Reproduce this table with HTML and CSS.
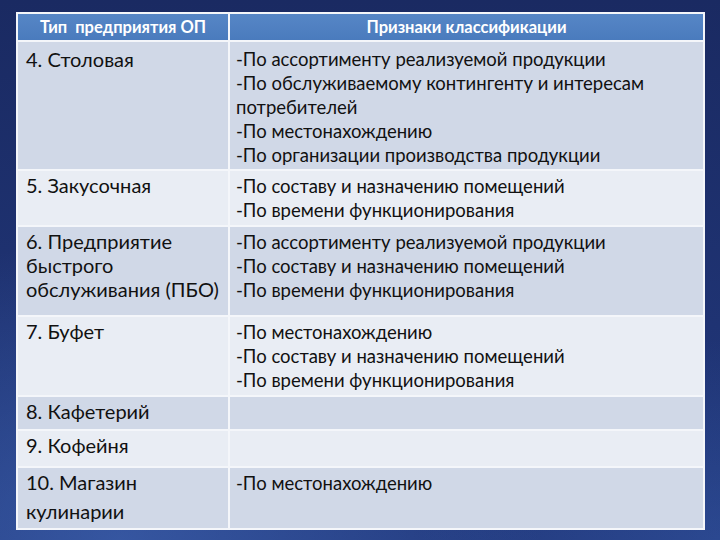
FILE: index.html
```html
<!DOCTYPE html>
<html lang="ru">
<head>
<meta charset="utf-8">
<link rel="stylesheet" href="styles.css">
</head>
<body>
<div class="slide">
<table class="grid">
  <colgroup><col class="c1"><col class="c2"></colgroup>
  <thead>
    <tr class="head"><th>Тип&nbsp; предприятия ОП</th><th>Признаки классификации</th></tr>
  </thead>
  <tbody>
    <tr class="odd r4"><td class="name">4. Столовая</td><td class="sign">-По ассортименту реализуемой продукции<br>-По обслуживаемому контингенту и интересам потребителей<br>-По местонахождению<br>-По организации производства продукции</td></tr>
    <tr class="even r5"><td class="name">5. Закусочная</td><td class="sign">-По составу и назначению помещений<br>-По времени функционирования</td></tr>
    <tr class="odd r6"><td class="name">6. Предприятие быстрого обслуживания (ПБО)</td><td class="sign">-По ассортименту реализуемой продукции<br>-По составу и назначению помещений<br>-По времени функционирования</td></tr>
    <tr class="even r7"><td class="name">7. Буфет</td><td class="sign">-По местонахождению<br>-По составу и назначению помещений<br>-По времени функционирования</td></tr>
    <tr class="odd r8"><td class="name">8. Кафетерий</td><td class="sign"></td></tr>
    <tr class="even r9"><td class="name">9. Кофейня</td><td class="sign"></td></tr>
    <tr class="odd r10"><td class="name">10. Магазин кулинарии</td><td class="sign">-По местонахождению</td></tr>
  </tbody>
</table>
</div>
</body>
</html>
```
FILE: styles.css
```css
html, body {
  margin: 0;
  padding: 0;
}
body {
  width: 720px;
  height: 540px;
  overflow: hidden;
  background: #1c2d6a;
}
.slide {
  width: 720px;
  height: 540px;
  box-sizing: border-box;
  padding: 12px 0 0 16px;
  background:
    radial-gradient(ellipse 420px 300px at 120px 540px, rgba(70,110,190,0.55), rgba(70,110,190,0) 100%),
    radial-gradient(ellipse 300px 200px at 720px 540px, rgba(60,100,180,0.35), rgba(60,100,180,0) 100%),
    linear-gradient(180deg, #1a2a62 0%, #1f3373 60%, #22397d 100%);
  font-family: Lato, "Liberation Sans", sans-serif;
}
.grid {
  width: 687px;
  border-collapse: collapse;
  table-layout: fixed;
  color: #111;
}
.c1 { width: 212px; }
.c2 { width: 475px; }
.grid th, .grid td {
  border: 2px solid #f4f6fa;
  vertical-align: top;
  text-align: left;
}
.head { height: 28px; }
.head th {
  padding: 2px 0 0;
  background: linear-gradient(180deg, #5686c6 0%, #4a7bbd 100%);
  color: #fff;
  font-weight: bold;
  font-size: 16.5px;
  text-align: center;
  line-height: 22px;
}
.odd td { background: #d0d8e7; }
.even td { background: #e9edf4; }
.name {
  padding: 2px 2px 0 8px;
  font-size: 20px;
  line-height: 24px;
}
.sign {
  padding: 3px 2px 0 6px;
  font-size: 18.5px;
  line-height: 24px;
}
.r4 { height: 129px; }
.r4 td { padding-top: 5px; }
.r5 { height: 56px; }
.r6 { height: 90px; }
.r7 { height: 80px; }
.r8 { height: 34px; }
.r9 { height: 37px; }
.r10 { height: 62px; }
.r10 .name { line-height: 29px; padding-top: 0; }
```
